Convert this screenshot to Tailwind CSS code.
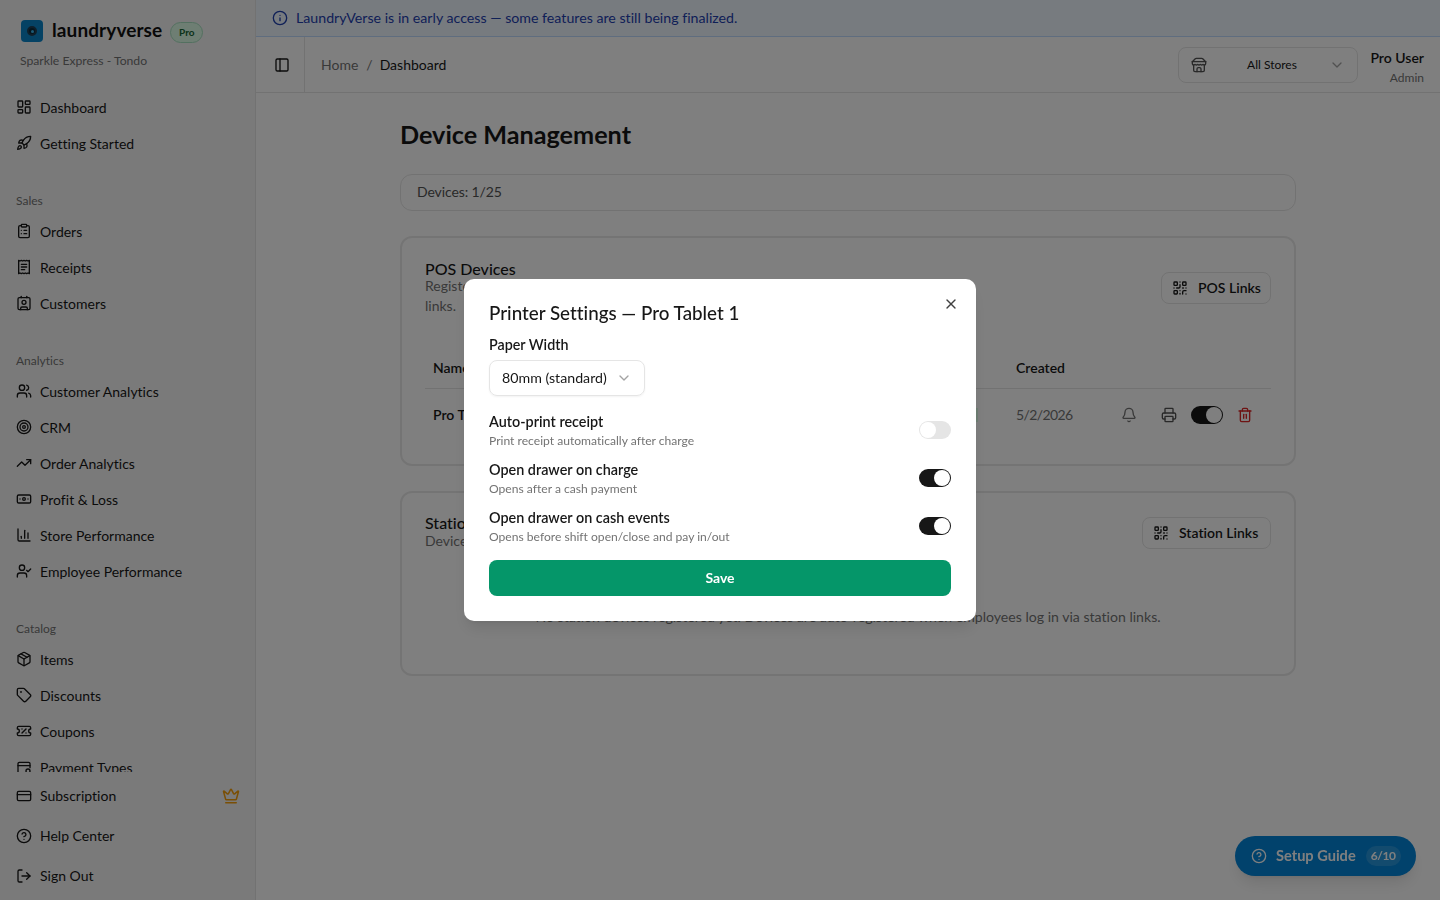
<!doctype html>
<html lang="en"><head><meta charset="utf-8"><title>Device Management</title>
<script src="https://cdn.jsdelivr.net/npm/@tailwindcss/browser@4"></script></head>
<body class="font-['Lato',sans-serif] [font-variant-ligatures:none] text-[#171717] bg-white">
<div class="flex h-[900px] w-[1440px] overflow-hidden">
<aside class="w-[256px] shrink-0 h-full flex flex-col bg-[#f5f5f5] border-r border-[#e5e5e5]">
  <div class="h-[89px] shrink-0 pl-[20px] pt-[19px]">
    <div class="flex items-center h-[24px]">
      <div class="w-[22px] h-[22px] rounded-[4px] bg-[#0a84c8] flex items-center justify-center ml-[1px]"><div class="w-[10px] h-[10px] rounded-full bg-[#0b2b3c] border-[2px] border-[#1f3f55] flex items-center justify-center"><div class="w-[3px] h-[3px] rounded-full bg-[#39b7f0]"></div></div></div>
      <span class="ml-[9px] text-[19px] font-bold leading-[24px] tracking-[0.1px] text-[#111] mt-[-2px]">laundryverse</span>
      <span class="ml-[8px] h-[21px] w-[33px] justify-center rounded-full border border-[#a7e0c0] bg-[#dcfce7] text-[#166534] text-[10px] font-bold flex items-center mt-[3px]">Pro</span>
    </div>
    <div class="text-[12.2px] text-[#737373] mt-[10px] leading-[16px]">Sparkle Express - Tondo</div>
  </div>
  <nav class="flex-1 overflow-hidden text-[14px] min-h-0">
    <a class="flex items-center gap-[8px] h-[36px] pl-[16px]"><svg class="w-[16px] h-[16px]" viewBox="0 0 24 24" fill="none" stroke="currentColor" stroke-width="2" stroke-linecap="round" stroke-linejoin="round"><rect x="3" y="3" width="7" height="9" rx="1"/><rect x="14" y="3" width="7" height="5" rx="1"/><rect x="14" y="12" width="7" height="9" rx="1"/><rect x="3" y="16" width="7" height="5" rx="1"/></svg>Dashboard</a>
    <a class="flex items-center gap-[8px] h-[36px] pl-[16px]"><svg class="w-[16px] h-[16px]" viewBox="0 0 24 24" fill="none" stroke="currentColor" stroke-width="2" stroke-linecap="round" stroke-linejoin="round"><path d="M4.5 16.5c-1.5 1.26-2 5-2 5s3.74-.5 5-2c.71-.84.7-2.13-.09-2.91a2.18 2.18 0 0 0-2.91-.09z"/><path d="m12 15-3-3a22 22 0 0 1 2-3.95A12.88 12.88 0 0 1 22 2c0 2.72-.78 7.5-6 11a22.35 22.35 0 0 1-4 2z"/><path d="M9 12H4s.55-3.03 2-4c1.62-1.08 5 0 5 0"/><path d="M12 15v5s3.03-.55 4-2c1.08-1.62 0-5 0-5"/></svg>Getting Started</a>
    <div class="h-[20px] mt-[30px] mb-[2px] pl-[16px] flex items-center text-[12px] text-[#737373]">Sales</div>
    <a class="flex items-center gap-[8px] h-[36px] pl-[16px]"><svg class="w-[16px] h-[16px]" viewBox="0 0 24 24" fill="none" stroke="currentColor" stroke-width="2" stroke-linecap="round" stroke-linejoin="round"><rect x="8" y="2" width="8" height="4" rx="1"/><path d="M16 4h2a2 2 0 0 1 2 2v14a2 2 0 0 1-2 2H6a2 2 0 0 1-2-2V6a2 2 0 0 1 2-2h2"/><path d="M12 11h4"/><path d="M12 16h4"/><path d="M8 11h.01"/><path d="M8 16h.01"/></svg>Orders</a>
    <a class="flex items-center gap-[8px] h-[36px] pl-[16px]"><svg class="w-[16px] h-[16px]" viewBox="0 0 24 24" fill="none" stroke="currentColor" stroke-width="2" stroke-linecap="round" stroke-linejoin="round"><path d="M4 2v20l2-1 2 1 2-1 2 1 2-1 2 1 2-1 2 1V2l-2 1-2-1-2 1-2-1-2 1-2-1-2 1Z"/><path d="M16 8H8"/><path d="M16 12H8"/><path d="M13 16H8"/></svg>Receipts</a>
    <a class="flex items-center gap-[8px] h-[36px] pl-[16px]"><svg class="w-[16px] h-[16px]" viewBox="0 0 24 24" fill="none" stroke="currentColor" stroke-width="2" stroke-linecap="round" stroke-linejoin="round"><path d="M16 2v2"/><path d="M7 22v-2a2 2 0 0 1 2-2h6a2 2 0 0 1 2 2v2"/><path d="M8 2v2"/><circle cx="12" cy="11" r="3"/><rect x="3" y="4" width="18" height="18" rx="2"/></svg>Customers</a>
    <div class="h-[20px] mt-[30px] mb-[2px] pl-[16px] flex items-center text-[12px] text-[#737373]">Analytics</div>
    <a class="flex items-center gap-[8px] h-[36px] pl-[16px]"><svg class="w-[16px] h-[16px]" viewBox="0 0 24 24" fill="none" stroke="currentColor" stroke-width="2" stroke-linecap="round" stroke-linejoin="round"><path d="M16 21v-2a4 4 0 0 0-4-4H6a4 4 0 0 0-4 4v2"/><circle cx="9" cy="7" r="4"/><path d="M22 21v-2a4 4 0 0 0-3-3.87"/><path d="M16 3.13a4 4 0 0 1 0 7.75"/></svg>Customer Analytics</a>
    <a class="flex items-center gap-[8px] h-[36px] pl-[16px]"><svg class="w-[16px] h-[16px]" viewBox="0 0 24 24" fill="none" stroke="currentColor" stroke-width="2" stroke-linecap="round" stroke-linejoin="round"><circle cx="12" cy="12" r="10"/><circle cx="12" cy="12" r="6"/><circle cx="12" cy="12" r="2"/></svg>CRM</a>
    <a class="flex items-center gap-[8px] h-[36px] pl-[16px]"><svg class="w-[16px] h-[16px]" viewBox="0 0 24 24" fill="none" stroke="currentColor" stroke-width="2" stroke-linecap="round" stroke-linejoin="round"><polyline points="22 7 13.5 15.5 8.5 10.5 2 17"/><polyline points="16 7 22 7 22 13"/></svg>Order Analytics</a>
    <a class="flex items-center gap-[8px] h-[36px] pl-[16px]"><svg class="w-[16px] h-[16px]" viewBox="0 0 24 24" fill="none" stroke="currentColor" stroke-width="2" stroke-linecap="round" stroke-linejoin="round"><rect x="2" y="6" width="20" height="12" rx="2"/><circle cx="12" cy="12" r="2"/><path d="M6 12h.01M18 12h.01"/></svg>Profit &amp; Loss</a>
    <a class="flex items-center gap-[8px] h-[36px] pl-[16px]"><svg class="w-[16px] h-[16px]" viewBox="0 0 24 24" fill="none" stroke="currentColor" stroke-width="2" stroke-linecap="round" stroke-linejoin="round"><path d="M3 3v16a2 2 0 0 0 2 2h16"/><path d="M18 17V9"/><path d="M13 17V5"/><path d="M8 17v-3"/></svg>Store Performance</a>
    <a class="flex items-center gap-[8px] h-[36px] pl-[16px]"><svg class="w-[16px] h-[16px]" viewBox="0 0 24 24" fill="none" stroke="currentColor" stroke-width="2" stroke-linecap="round" stroke-linejoin="round"><path d="M16 21v-2a4 4 0 0 0-4-4H6a4 4 0 0 0-4 4v2"/><circle cx="9" cy="7" r="4"/><polyline points="16 11 18 13 22 9"/></svg>Employee Performance</a>
    <div class="h-[20px] mt-[30px] mb-[2px] pl-[16px] flex items-center text-[12px] text-[#737373]">Catalog</div>
    <a class="flex items-center gap-[8px] h-[36px] pl-[16px]"><svg class="w-[16px] h-[16px]" viewBox="0 0 24 24" fill="none" stroke="currentColor" stroke-width="2" stroke-linecap="round" stroke-linejoin="round"><path d="M11 21.73a2 2 0 0 0 2 0l7-4A2 2 0 0 0 21 16V8a2 2 0 0 0-1-1.73l-7-4a2 2 0 0 0-2 0l-7 4A2 2 0 0 0 3 8v8a2 2 0 0 0 1 1.73z"/><path d="M12 22V12"/><polyline points="3.29 7 12 12 20.71 7"/><path d="m7.5 4.27 9 5.15"/></svg>Items</a>
    <a class="flex items-center gap-[8px] h-[36px] pl-[16px]"><svg class="w-[16px] h-[16px]" viewBox="0 0 24 24" fill="none" stroke="currentColor" stroke-width="2" stroke-linecap="round" stroke-linejoin="round"><path d="M12.586 2.586A2 2 0 0 0 11.172 2H4a2 2 0 0 0-2 2v7.172a2 2 0 0 0 .586 1.414l8.704 8.704a2.426 2.426 0 0 0 3.42 0l6.58-6.58a2.426 2.426 0 0 0 0-3.42z"/><circle cx="7.5" cy="7.5" r=".5"/></svg>Discounts</a>
    <a class="flex items-center gap-[8px] h-[36px] pl-[16px]"><svg class="w-[16px] h-[16px]" viewBox="0 0 24 24" fill="none" stroke="currentColor" stroke-width="2" stroke-linecap="round" stroke-linejoin="round"><path d="M2 9a3 3 0 0 1 0 6v2a2 2 0 0 0 2 2h16a2 2 0 0 0 2-2v-2a3 3 0 0 1 0-6V7a2 2 0 0 0-2-2H4a2 2 0 0 0-2 2Z"/><path d="M9 9h.01"/><path d="m15 9-6 6"/><path d="M15 15h.01"/></svg>Coupons</a>
    <a class="flex items-center gap-[8px] h-[36px] pl-[16px]"><svg class="w-[16px] h-[16px]" viewBox="0 0 24 24" fill="none" stroke="currentColor" stroke-width="2" stroke-linecap="round" stroke-linejoin="round"><path d="M3 22V7a2 2 0 0 1 2-2h14a2 2 0 0 1 2 2v6"/><path d="M3 10h18"/><circle cx="18" cy="18" r="3"/></svg>Payment Types</a>
  </nav>
  <div class="shrink-0 text-[14px] h-[128px]">
    <a class="flex items-center gap-[8px] h-[48px] pl-[16px] pr-[16px]"><svg class="w-[16px] h-[16px]" viewBox="0 0 24 24" fill="none" stroke="currentColor" stroke-width="2" stroke-linecap="round" stroke-linejoin="round"><rect x="2" y="5" width="20" height="14" rx="2"/><line x1="2" y1="10" x2="22" y2="10"/></svg><span class="mb-[2px]">Subscription</span><svg class="w-[18px] h-[18px] ml-auto mr-[-1px] text-[#f59e0b]" viewBox="0 0 24 24" fill="none" stroke="currentColor" stroke-width="2" stroke-linecap="round" stroke-linejoin="round"><path d="M11.562 3.266a.5.5 0 0 1 .876 0L15.39 8.87a1 1 0 0 0 1.516.294L21.183 5.5a.5.5 0 0 1 .798.519l-2.834 10.246a1 1 0 0 1-.956.734H5.81a1 1 0 0 1-.957-.734L2.02 6.02a.5.5 0 0 1 .798-.519l4.276 3.664a1 1 0 0 0 1.516-.294z"/><path d="M5 21h14"/></svg></a>
    <a class="flex items-center gap-[8px] h-[36px] pl-[16px] mt-[-2px]"><svg class="w-[16px] h-[16px]" viewBox="0 0 24 24" fill="none" stroke="currentColor" stroke-width="2" stroke-linecap="round" stroke-linejoin="round"><circle cx="12" cy="12" r="10"/><path d="M9.09 9a3 3 0 0 1 5.83 1c0 2-3 3-3 3"/><path d="M12 17h.01"/></svg><span class="mb-[2px]">Help Center</span></a>
    <a class="flex items-center gap-[8px] h-[36px] pl-[16px] mt-[4px]"><svg class="w-[16px] h-[16px]" viewBox="0 0 24 24" fill="none" stroke="currentColor" stroke-width="2" stroke-linecap="round" stroke-linejoin="round"><path d="M9 21H5a2 2 0 0 1-2-2V5a2 2 0 0 1 2-2h4"/><polyline points="16 17 21 12 16 7"/><line x1="21" y1="12" x2="9" y2="12"/></svg><span class="mb-[2px]">Sign Out</span></a>
  </div>
</aside>
<div class="flex-1 min-w-0 flex flex-col bg-white">
  <div class="h-[37px] shrink-0 bg-[#eff6ff] border-b border-[#bfdbfe] flex items-center pl-[16px] text-[14.2px] text-[#1e40af] gap-[8px]">
    <svg class="w-[16px] h-[16px]" viewBox="0 0 24 24" fill="none" stroke="currentColor" stroke-width="2" stroke-linecap="round" stroke-linejoin="round"><circle cx="12" cy="12" r="10"/><path d="M12 16v-4"/><path d="M12 8h.01"/></svg>
    LaundryVerse is in early access — some features are still being finalized.
  </div>
  <header class="h-[56px] shrink-0 flex items-center border-b border-[#e5e5e5] text-[14px]">
    <div class="w-[49px] h-full border-r border-[#e5e5e5] flex items-center pl-[18px]"><svg class="w-[16px] h-[16px]" viewBox="0 0 24 24" fill="none" stroke="currentColor" stroke-width="2" stroke-linecap="round" stroke-linejoin="round"><rect x="3" y="3" width="18" height="18" rx="2"/><path d="M9 3v18"/></svg></div>
    <div class="ml-[16px] flex items-center gap-[8px]"><span class="text-[#737373]">Home</span><span class="text-[#737373]">/</span><span class="ml-[-1px]">Dashboard</span></div>
    <div class="ml-auto w-[180px] h-[36px] border border-[#e5e5e5] rounded-[8px] flex items-center pl-[12px] pr-[12px] text-[12px]">
      <svg class="w-[16px] h-[16px] text-[#525252]" viewBox="0 0 24 24" fill="none" stroke="currentColor" stroke-width="2" stroke-linecap="round" stroke-linejoin="round"><path d="m2 7 4.41-4.41A2 2 0 0 1 7.83 2h8.34a2 2 0 0 1 1.42.59L22 7"/><path d="M4 12v8a2 2 0 0 0 2 2h12a2 2 0 0 0 2-2v-8"/><path d="M15 22v-4a2 2 0 0 0-2-2h-2a2 2 0 0 0-2 2v4"/><path d="M2 7h20"/><path d="M22 7v3a2 2 0 0 1-2 2a2.7 2.7 0 0 1-1.59-.63.7.7 0 0 0-.82 0A2.7 2.7 0 0 1 16 12a2.7 2.7 0 0 1-1.59-.63.7.7 0 0 0-.82 0A2.7 2.7 0 0 1 12 12a2.7 2.7 0 0 1-1.59-.63.7.7 0 0 0-.82 0A2.7 2.7 0 0 1 8 12a2.7 2.7 0 0 1-1.59-.63.7.7 0 0 0-.82 0A2.7 2.7 0 0 1 4 12a2 2 0 0 1-2-2V7"/></svg>
      <span class="flex-1 text-center pl-[8px]">All Stores</span>
      <svg class="w-[16px] h-[16px] text-[#a3a3a3]" viewBox="0 0 24 24" fill="none" stroke="currentColor" stroke-width="2" stroke-linecap="round" stroke-linejoin="round"><path d="m6 9 6 6 6-6"/></svg>
    </div>
    <div class="ml-[12px] mr-[16px] mt-[4px] w-[54px] whitespace-nowrap flex flex-col items-end"><div class="text-[14px] font-semibold leading-[20px]">Pro User</div><div class="text-[12px] text-[#737373] leading-[16px] mt-[2px]">Admin</div></div>
  </header>
  <main class="flex-1 min-h-0">
    <div class="w-[896px] mx-auto">
      <h1 class="text-[25.2px] font-bold leading-[32px] mt-[25px]">Device Management</h1>
      <div class="mt-[24px] h-[37px] pb-[2px] border border-[#e5e5e5] rounded-[12px] flex items-center pl-[16px] text-[14px] text-[#525252] tracking-[-0.1px]">Devices: 1/25</div>
      <section class="mt-[25px] h-[230px] border-2 border-[#e9e9e9] rounded-[12px] px-[23px] pt-[20px]">
        <div class="flex justify-between">
          <div><div class="text-[16px] font-medium leading-[20px] mt-[1px]">POS Devices</div><div class="text-[14px] text-[#737373] leading-[20px] mt-[-3px]">Register new devices here. Devices are auto-registered when employees log in via POS<br>links.</div></div>
          <button class="h-[32px] pb-[2px] mt-[14px] w-[110px] pl-[10px] border border-[#e5e5e5] rounded-[8px] flex items-center gap-[10px] text-[14px] font-semibold whitespace-nowrap"><svg class="w-[16px] h-[16px] mt-[2px]" viewBox="0 0 24 24" fill="none" stroke="currentColor" stroke-width="2" stroke-linecap="round" stroke-linejoin="round"><rect x="3" y="3" width="5" height="5" rx="1"/><rect x="16" y="3" width="5" height="5" rx="1"/><rect x="3" y="16" width="5" height="5" rx="1"/><path d="M21 16h-3a2 2 0 0 0-2 2v3"/><path d="M21 21v.01"/><path d="M12 7v3a2 2 0 0 1-2 2H7"/><path d="M3 12h.01"/><path d="M12 3h.01"/><path d="M12 16v.01"/><path d="M16 12h1"/><path d="M21 12v.01"/><path d="M12 21v-1"/></svg>POS Links</button>
        </div>
        <div class="mt-[32px] h-[41px] pb-[2px] border-b border-[#e5e5e5] flex items-center text-[14px] font-semibold pl-[8px]"><span>Name</span><span class="ml-auto w-[255px]">Created</span></div>
        <div class="h-[52px] flex items-center text-[14px] pl-[8px] relative"><span class="font-semibold mb-[2px]">Pro Tablet 1</span><span class="absolute left-[551px] w-[2px] h-[14px] bg-[#dcfce7]"></span>
          <span class="ml-auto w-[105px] text-[#737373] mb-[2px] tracking-[-0.6px]">5/2/2026</span>
          <div class="w-[150px] flex items-center">
            <svg class="w-[16px] h-[16px] text-[#737373]" viewBox="0 0 24 24" fill="none" stroke="currentColor" stroke-width="2" stroke-linecap="round" stroke-linejoin="round"><path d="M10.268 21a2 2 0 0 0 3.464 0"/><path d="M3.262 15.326A1 1 0 0 0 4 17h16a1 1 0 0 0 .74-1.673C19.41 13.956 18 12.499 18 8A6 6 0 0 0 6 8c0 4.499-1.411 5.956-2.738 7.326"/></svg>
            <svg class="w-[16px] h-[16px] text-[#525252] ml-[24px]" viewBox="0 0 24 24" fill="none" stroke="currentColor" stroke-width="2" stroke-linecap="round" stroke-linejoin="round"><path d="M6 18H4a2 2 0 0 1-2-2v-5a2 2 0 0 1 2-2h16a2 2 0 0 1 2 2v5a2 2 0 0 1-2 2h-2"/><path d="M6 9V3a1 1 0 0 1 1-1h10a1 1 0 0 1 1 1v6"/><rect x="6" y="14" width="12" height="8" rx="1"/></svg>
            <div class="ml-[14px] w-[32px] h-[18px] rounded-full bg-[#171717] flex items-center justify-end pr-[1px]"><div class="w-[16px] h-[16px] rounded-full bg-white"></div></div>
            <svg class="w-[16px] h-[16px] text-[#dc2626] ml-[14px]" viewBox="0 0 24 24" fill="none" stroke="currentColor" stroke-width="2" stroke-linecap="round" stroke-linejoin="round"><path d="M3 6h18"/><path d="M19 6v14c0 1-1 2-2 2H7c-1 0-2-1-2-2V6"/><path d="M8 6V4c0-1 1-2 2-2h4c1 0 2 1 2 2v2"/><line x1="10" y1="11" x2="10" y2="17"/><line x1="14" y1="11" x2="14" y2="17"/></svg>
          </div>
        </div>
      </section>
      <section class="mt-[25px] h-[185px] border-2 border-[#e9e9e9] rounded-[12px] px-[23px] pt-[20px]">
        <div class="flex justify-between">
          <div><div class="text-[16px] font-medium leading-[20px]">Station Devices</div><div class="text-[14px] text-[#737373] leading-[16px]">Devices registered here are used by stations.</div></div>
          <button class="h-[32px] pb-[2px] mt-[4px] w-[129px] pl-[10px] border border-[#e5e5e5] rounded-[8px] flex items-center gap-[10px] text-[14px] font-semibold whitespace-nowrap"><svg class="w-[16px] h-[16px] mt-[2px]" viewBox="0 0 24 24" fill="none" stroke="currentColor" stroke-width="2" stroke-linecap="round" stroke-linejoin="round"><rect x="3" y="3" width="5" height="5" rx="1"/><rect x="16" y="3" width="5" height="5" rx="1"/><rect x="3" y="16" width="5" height="5" rx="1"/><path d="M21 16h-3a2 2 0 0 0-2 2v3"/><path d="M21 21v.01"/><path d="M12 7v3a2 2 0 0 1-2 2H7"/><path d="M3 12h.01"/><path d="M12 3h.01"/><path d="M12 16v.01"/><path d="M16 12h1"/><path d="M21 12v.01"/><path d="M12 21v-1"/></svg>Station Links</button>
        </div>
        <div class="text-center text-[14.1px] text-[#737373] mt-[58px] leading-[20px]">No station devices registered yet. Devices are auto-registered when employees log in via station links.</div>
      </section>
    </div>
  </main>
</div>
</div>
<button class="fixed right-[24px] bottom-[24px] h-[40px] w-[181px] pl-[16px] rounded-full bg-[#0284d8] text-white flex items-center gap-[9px] text-[14px] font-bold shadow-lg"><svg class="w-[16px] h-[16px]" viewBox="0 0 24 24" fill="none" stroke="currentColor" stroke-width="2" stroke-linecap="round" stroke-linejoin="round"><circle cx="12" cy="12" r="10"/><path d="M9.09 9a3 3 0 0 1 5.83 1c0 2-3 3-3 3"/><path d="M12 17h.01"/></svg><span class="text-[14.6px]">Setup Guide</span><span class="ml-[1px] h-[20px] w-[35px] justify-center rounded-full bg-white/15 text-[12px] tracking-[-0.4px] flex items-center">6/10</span></button>
<div class="fixed inset-0 bg-black/50"></div>
<div class="fixed left-[464px] top-[279px] w-[512px] h-[342px] bg-white rounded-[10px] p-[25px] pt-[22px] shadow-lg">
  <svg class="absolute right-[17px] top-[17px] w-[16px] h-[16px] text-[#404040]" viewBox="0 0 24 24" fill="none" stroke="currentColor" stroke-width="2" stroke-linecap="round" stroke-linejoin="round"><path d="M18 6 6 18"/><path d="m6 6 12 12"/></svg>
  <h2 class="text-[18.8px] font-medium leading-[24px]">Printer Settings — Pro Tablet 1</h2>
  <div class="text-[14.3px] font-semibold leading-[20px] mt-[10px]">Paper Width</div>
  <div class="mt-[5px] w-[156px] h-[36px] border border-[#e5e5e5] rounded-[8px] flex items-center pl-[12px] text-[14.2px] shadow-xs whitespace-nowrap"><span class="mb-[1px]">80mm (standard)</span><svg class="w-[16px] h-[16px] ml-auto mr-[12px] text-[#a3a3a3]" viewBox="0 0 24 24" fill="none" stroke="currentColor" stroke-width="2" stroke-linecap="round" stroke-linejoin="round"><path d="m6 9 6 6 6-6"/></svg></div>
  <div class="mt-[16px] h-[36px] flex items-center justify-between"><div><div class="text-[14.4px] font-semibold leading-[20px]">Auto-print receipt</div><div class="text-[12.1px] text-[#737373] leading-[16px] mt-[1px]">Print receipt automatically after charge</div></div><div class="w-[32px] h-[18px] rounded-full bg-[#e5e5e5] flex items-center pl-[1px]"><div class="w-[16px] h-[16px] rounded-full bg-white"></div></div></div>
  <div class="mt-[12px] h-[36px] flex items-center justify-between"><div><div class="text-[14.4px] font-semibold leading-[20px]">Open drawer on charge</div><div class="text-[12.1px] text-[#737373] leading-[16px] mt-[1px]">Opens after a cash payment</div></div><div class="w-[32px] h-[18px] rounded-full bg-[#171717] flex items-center justify-end pr-[1px]"><div class="w-[16px] h-[16px] rounded-full bg-white"></div></div></div>
  <div class="mt-[12px] h-[36px] flex items-center justify-between"><div><div class="text-[14.4px] font-semibold leading-[20px]">Open drawer on cash events</div><div class="text-[12.1px] text-[#737373] leading-[16px] mt-[1px]">Opens before shift open/close and pay in/out</div></div><div class="w-[32px] h-[18px] rounded-full bg-[#171717] flex items-center justify-end pr-[1px]"><div class="w-[16px] h-[16px] rounded-full bg-white"></div></div></div>
  <button class="mt-[16px] w-full h-[36px] pb-[2px] rounded-[8px] bg-[#059669] text-white text-[14px] font-bold">Save</button>
</div>
</body></html>
